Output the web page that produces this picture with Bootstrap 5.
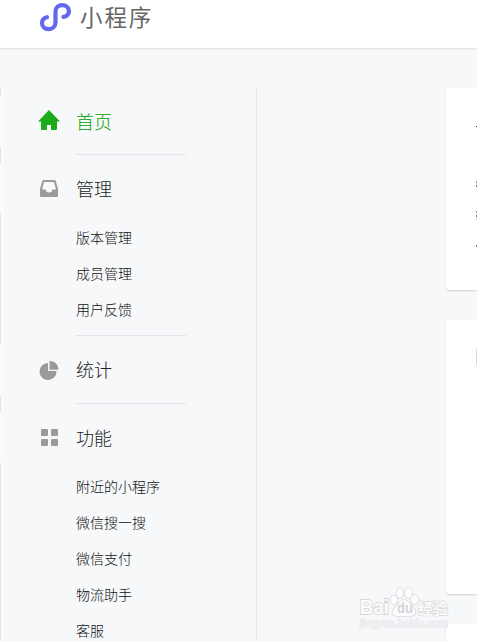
<!DOCTYPE html>
<html lang="zh-CN">
<head>
<meta charset="utf-8">
<meta name="viewport" content="width=device-width, initial-scale=1">
<title>小程序</title>
<link href="https://cdn.jsdelivr.net/npm/bootstrap@5.3.0/dist/css/bootstrap.min.css" rel="stylesheet">
<style>
body{font-family:"Noto Sans CJK SC","Liberation Sans",sans-serif;font-weight:300;background:#f6f8fa;color:#242424;height:641px}
.topbar{height:49px;border-bottom:1px solid #e1e3e5;box-shadow:0 1px 2px rgba(0,0,0,.04);padding-left:39px}
.brand-mark{margin-top:1px}
.brand-text{font-size:22.5px;line-height:32px;letter-spacing:1.9px;color:#666;margin-left:9px;margin-top:0;font-weight:400}
.page{height:592px;padding-top:39px}
.edge{width:4px;background:#f8fafc}
.edge i{width:1px;background:#e4e5e7}
.e1{height:8px;margin-bottom:51px}.e2{height:16px;margin-bottom:51px}.e3{height:130px;margin-bottom:52px}.e4{height:16px;margin-bottom:51px}.e5{height:178px}
.side{width:253px;padding-left:35px;border-right:1px solid #e5e7e9}
.menu-head{height:65px;padding-top:1px;font-size:18px}
.menu-head svg{width:20px;height:20px;margin-right:17px;margin-top:2px;fill:#9a9a9a}
.menu-head.current{color:#00a000}
.menu-head.current svg{width:22px;height:22px;margin-right:16px;margin-left:-1px;margin-top:-1px;fill:#1aad19}
.menu-sub{font-size:14px;height:36px;padding-left:37px;padding-bottom:2px;color:#111}
.rule{width:110px;margin-left:37px;height:1px;background:#e4e5e8}
.mt-a{margin-top:1px}.mt-b{margin-top:7px}.mt-c{margin-top:2px}
.content{width:220px;padding-left:189px}
.panel{background:#fff;border-radius:4px 0 0 4px;box-shadow:0 1px 2px rgba(0,0,0,.16);margin-bottom:30px;padding-left:30px}
.panel i{display:block;width:1px;background:#777}
.p1{height:202px;padding-top:38px}.p2{height:274px;padding-top:29px}.p3{height:17px;margin-bottom:0;border-bottom-left-radius:0}
.p1 .m1{height:1px;background:#333}.p1 .m2{height:9px;margin-top:54px;background:linear-gradient(#999 2px,#eee 2px 4px,#777 4px 6px,#eee 6px)}
.p1 .m3{height:9px;margin-top:21px;background:linear-gradient(#999 2px,#eee 2px 4px,#777 4px 6px,#eee 6px)}
.p1 .m4{height:2px;margin-top:25px}.p2 .m5{height:16px;background:#d8d8d8}
.stamp{right:26px;bottom:8px;width:94px;height:48px}
</style>
<script src="https://cdn.jsdelivr.net/npm/bootstrap@5.3.0/dist/js/bootstrap.bundle.min.js"></script>
</head>
<body class="overflow-hidden position-relative">
<header class="topbar bg-white d-flex align-items-start">
  <svg class="brand-mark" width="32" height="32" viewBox="0 0 32 32" fill="none" stroke="#6467ef" stroke-width="4.200" stroke-linecap="round"><path d="M8 16.200C5 16.900 3 19.200 3 22c0 3.600 2.900 6.100 6.500 6.100s7-2.500 7-6.600v-11c0-4 3-6.400 6.700-6.400s6.700 2.500 6.700 6.100c0 2.900-2 5-5.400 5.700"/></svg>
  <span class="brand-text">小程序</span>
</header>
<main class="page d-flex align-items-stretch">
  <div class="edge d-flex flex-column flex-shrink-0"><i class="e1"></i><i class="e2"></i><i class="e3"></i><i class="e4"></i><i class="e5"></i></div>
  <nav class="side flex-shrink-0 overflow-hidden">
    <div class="menu-head current d-flex align-items-center"><svg viewBox="0 0 22 22"><path d="M11 0 22 11.500h-3V19q0 1-1 1h-5v-5H9v5H4q-1 0-1-1v-7.500H0z"/></svg>首页</div>
    <div class="rule mt-a"></div>
    <div class="menu-head d-flex align-items-center"><svg viewBox="0 0 20 20"><path fill-rule="evenodd" d="M4.500 1h11q1 0 1.300 1L19 10v7q0 1-1 1H2q-1 0-1-1v-7l2.200-8q.3-1 1.300-1zM5 3 3 10.500h3.500q.5 3 3.500 3t3.500-3H17L15 3z"/></svg>管理</div>
    <div class="menu-sub d-flex align-items-center">版本管理</div>
    <div class="menu-sub d-flex align-items-center">成员管理</div>
    <div class="menu-sub d-flex align-items-center">用户反馈</div>
    <div class="rule mt-b"></div>
    <div class="menu-head d-flex align-items-center"><svg viewBox="0 0 20 20"><path d="M9 3v8h8.500A8.500 8.500 0 1 1 9 3zM10.500 1A8.500 8.500 0 0 1 19.500 9.700h-9z"/></svg>统计</div>
    <div class="rule mt-c"></div>
    <div class="menu-head d-flex align-items-center"><svg viewBox="0 0 20 20"><rect x="2" y="1" width="7" height="7" rx="1"/><rect x="12" y="1" width="7" height="7" rx="1"/><rect x="2" y="11" width="7" height="7" rx="1"/><rect x="12" y="11" width="7" height="7" rx="1"/></svg>功能</div>
    <div class="menu-sub d-flex align-items-center">附近的小程序</div>
    <div class="menu-sub d-flex align-items-center">微信搜一搜</div>
    <div class="menu-sub d-flex align-items-center">微信支付</div>
    <div class="menu-sub d-flex align-items-center">物流助手</div>
    <div class="menu-sub d-flex align-items-center">客服</div>
  </nav>
  <section class="content flex-shrink-0">
    <div class="panel p1"><i class="m1"></i><i class="m2"></i><i class="m3"></i><i class="m4"></i></div>
    <div class="panel p2"><i class="m5"></i></div>
    <div class="panel p3"></div>
  </section>
</main>
<svg class="stamp position-absolute" viewBox="0 0 94 48" font-family="Liberation Sans, Noto Sans CJK SC, sans-serif" font-weight="700" fill="#fbfcfd" stroke="#d6d8da" stroke-width="1.800" paint-order="stroke">
  <text x="3" y="29" font-size="20" textLength="29" lengthAdjust="spacingAndGlyphs">Bai</text>
  <g stroke-width="1.500"><ellipse cx="37" cy="15" rx="3.500" ry="4.700"/><ellipse cx="43" cy="8" rx="3.500" ry="5"/><ellipse cx="51.500" cy="8" rx="3.500" ry="5"/><ellipse cx="57.500" cy="14.500" rx="3.500" ry="4.700"/><path d="M47 15c4.500 0 6 5 9.500 8 4 4 2 8.500-4 8H41.500c-6 .5-8-4-4-8 3.500-3 5-8 9.500-8z"/></g>
  <text x="40" y="28" font-size="14" fill="#d3d5d7" stroke="none" textLength="16" lengthAdjust="spacingAndGlyphs">du</text>
  <text x="61" y="29" font-size="15" stroke-width="1.300" font-family="Noto Sans CJK SC">经验</text>
  <text x="3" y="42" font-size="11" font-weight="400" fill="#f6f8fa" stroke="#dfe1e3" stroke-width="1" textLength="88" lengthAdjust="spacingAndGlyphs">jingyan.baidu.com</text>
</svg>
</body>
</html>
